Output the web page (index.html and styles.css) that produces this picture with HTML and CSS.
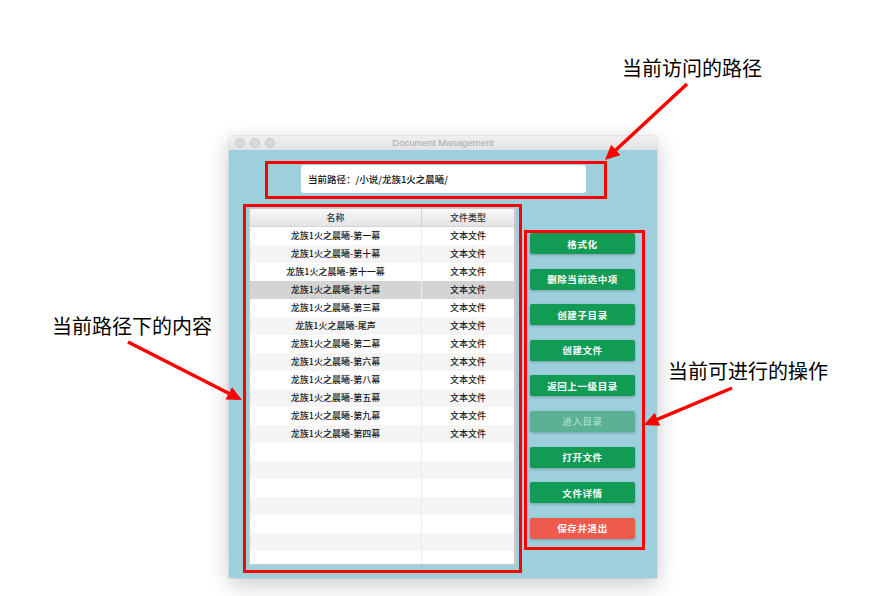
FILE: index.html
```html
<!DOCTYPE html>
<html lang="zh">
<head>
<meta charset="utf-8">
<title>Document Management</title>
<link rel="stylesheet" href="styles.css">
</head>
<body>
<div class="page">
  <div class="window">
    <div class="titlebar">
      <div class="lights"><span class="light"></span><span class="light"></span><span class="light"></span></div>
      <div class="title">Document Management</div>
      <div></div>
    </div>
    <div class="content">
      <div class="pathbox">当前路径：/小说/龙族1火之晨曦/</div>
      <div class="main">
        <div class="table">
          <div class="thead"><div class="c1">名称</div><div class="c2">文件类型</div></div>
          <div class="tbody">
            <div class="row"><div class="c1">龙族1火之晨曦-第一幕</div><div class="c2">文本文件</div></div>
            <div class="row"><div class="c1">龙族1火之晨曦-第十幕</div><div class="c2">文本文件</div></div>
            <div class="row"><div class="c1">龙族1火之晨曦-第十一幕</div><div class="c2">文本文件</div></div>
            <div class="row selected"><div class="c1">龙族1火之晨曦-第七幕</div><div class="c2">文本文件</div></div>
            <div class="row"><div class="c1">龙族1火之晨曦-第三幕</div><div class="c2">文本文件</div></div>
            <div class="row"><div class="c1">龙族1火之晨曦-尾声</div><div class="c2">文本文件</div></div>
            <div class="row"><div class="c1">龙族1火之晨曦-第二幕</div><div class="c2">文本文件</div></div>
            <div class="row"><div class="c1">龙族1火之晨曦-第六幕</div><div class="c2">文本文件</div></div>
            <div class="row"><div class="c1">龙族1火之晨曦-第八幕</div><div class="c2">文本文件</div></div>
            <div class="row"><div class="c1">龙族1火之晨曦-第五幕</div><div class="c2">文本文件</div></div>
            <div class="row"><div class="c1">龙族1火之晨曦-第九幕</div><div class="c2">文本文件</div></div>
            <div class="row"><div class="c1">龙族1火之晨曦-第四幕</div><div class="c2">文本文件</div></div>
            <div class="row"><div class="c1"></div><div class="c2"></div></div>
            <div class="row"><div class="c1"></div><div class="c2"></div></div>
            <div class="row"><div class="c1"></div><div class="c2"></div></div>
            <div class="row"><div class="c1"></div><div class="c2"></div></div>
            <div class="row"><div class="c1"></div><div class="c2"></div></div>
            <div class="row"><div class="c1"></div><div class="c2"></div></div>
            <div class="row"><div class="c1"></div><div class="c2"></div></div>
          </div>
        </div>
        <div class="actions">
          <button class="btn">格式化</button>
          <button class="btn">删除当前选中项</button>
          <button class="btn">创建子目录</button>
          <button class="btn">创建文件</button>
          <button class="btn">返回上一级目录</button>
          <button class="btn disabled">进入目录</button>
          <button class="btn">打开文件</button>
          <button class="btn">文件详情</button>
          <button class="btn danger">保存并退出</button>
        </div>
      </div>
    </div>
  </div>
</div>

<div class="note note-path">当前访问的路径</div>
<div class="note note-content">当前路径下的内容</div>
<div class="note note-actions">当前可进行的操作</div>

<svg class="overlay" width="873" height="596" viewBox="0 0 873 596" xmlns="http://www.w3.org/2000/svg">
  <defs>
    <marker id="ah" markerWidth="16" markerHeight="14" refX="6" refY="7" orient="auto" markerUnits="userSpaceOnUse">
      <path d="M0,0 L15,7 L0,14 z" fill="#ff0000"/>
    </marker>
  </defs>
  <g fill="none" stroke="#ff0000" stroke-width="3">
    <rect x="266.5" y="162.5" width="339" height="35"/>
    <rect x="244.5" y="205.5" width="276" height="366"/>
    <rect x="525.5" y="231.5" width="118" height="317"/>
  </g>
  <g stroke="#ff0000" stroke-width="3.5">
    <line x1="687" y1="84" x2="611.5" y2="154" marker-end="url(#ah)"/>
    <line x1="128" y1="342" x2="234" y2="396" marker-end="url(#ah)"/>
    <line x1="732" y1="388" x2="652" y2="421.6" marker-end="url(#ah)"/>
  </g>
</svg>
</body>
</html>
```

FILE: styles.css
```css
html, body {
  margin: 0;
  padding: 0;
}
body {
  width: 873px;
  height: 596px;
  background: #ffffff;
  position: relative;
  overflow: hidden;
  font-family: "Noto Sans CJK SC", "Liberation Sans", sans-serif;
}
.page {
  padding: 136px 0 0 229px;
}
.window {
  width: 428px;
  height: 442px;
  border-radius: 4px 4px 0 0;
  overflow: hidden;
  box-shadow: 0 6px 22px rgba(0, 0, 0, 0.22), 0 0 0 1px rgba(0, 0, 0, 0.06);
}
.titlebar {
  height: 14px;
  background: linear-gradient(#efefef, #e3e3e3);
  display: grid;
  grid-template-columns: 1fr auto 1fr;
  align-items: center;
}
.lights {
  display: flex;
  gap: 5px;
  padding-left: 6px;
}
.light {
  width: 8px;
  height: 8px;
  border-radius: 50%;
  background: #d9d9d9;
  border: 0.5px solid #c8c8c8;
}
.title {
  font-family: "Liberation Sans", Arial, sans-serif;
  font-size: 9.5px;
  color: #a9a9a9;
  line-height: 14px;
}
.content {
  height: 428px;
  background: #9ecfdc;
  box-sizing: border-box;
  padding-top: 15px;
}
.pathbox {
  margin-left: 72px;
  width: 285px;
  height: 28px;
  box-sizing: border-box;
  background: #ffffff;
  border-radius: 3px;
  padding-left: 7px;
  font-size: 9.5px;
  line-height: 28px;
  color: #111;
  font-weight: 500;
}
.main {
  display: flex;
  margin-top: 15px;
  margin-left: 20px;
}
.table {
  width: 267px;
  height: 357px;
  box-sizing: border-box;
  border: 1px solid #c9c9c9;
  border-right-width: 2px;
  background: #ffffff;
  overflow: hidden;
  font-size: 9px;
  font-weight: 500;
  color: #1a1a1a;
}
.thead {
  display: grid;
  grid-template-columns: 172px 92px;
  height: 18px;
  line-height: 18px;
  background: linear-gradient(#f8f8f8, #e4e4e4);
  border-bottom: 1px solid #d4d4d4;
  box-sizing: border-box;
  color: #333;
}
.thead .c1 {
  border-right: 1px solid #d0d0d0;
}
.tbody .row {
  display: grid;
  grid-template-columns: 172px 92px;
  height: 18px;
  line-height: 18px;
}
.tbody .row:nth-child(even) {
  background: #f5f5f5;
}
.tbody .row.selected {
  background: #d4d4d4;
}
.tbody .c1 {
  border-right: 1px solid #ececec;
}
.c1, .c2 {
  text-align: center;
  white-space: nowrap;
}
.actions {
  display: flex;
  flex-direction: column;
  gap: 14.6px;
  margin-left: 14px;
  padding-top: 25px;
}
.btn {
  width: 105px;
  height: 21px;
  padding: 0;
  border: none;
  border-radius: 2px;
  background: #129b55;
  color: #ffffff;
  font-family: "Noto Sans CJK SC", sans-serif;
  font-size: 9.5px;
  font-weight: 700;
  letter-spacing: 0.6px;
  box-shadow: 0 1px 3px rgba(0, 0, 0, 0.25);
}
.btn.disabled {
  background: #5bb095;
  color: #9fd7c2;
}
.btn.danger {
  background: #ee5a4b;
}
.note {
  position: absolute;
  font-family: "Noto Sans CJK SC", sans-serif;
  font-size: 20px;
  line-height: 20px;
  color: #000;
  white-space: nowrap;
}
.note-path {
  left: 622px;
  top: 58px;
}
.note-content {
  left: 52px;
  top: 316px;
}
.note-actions {
  left: 668px;
  top: 361px;
}
.overlay {
  position: absolute;
  left: 0;
  top: 0;
}
```
